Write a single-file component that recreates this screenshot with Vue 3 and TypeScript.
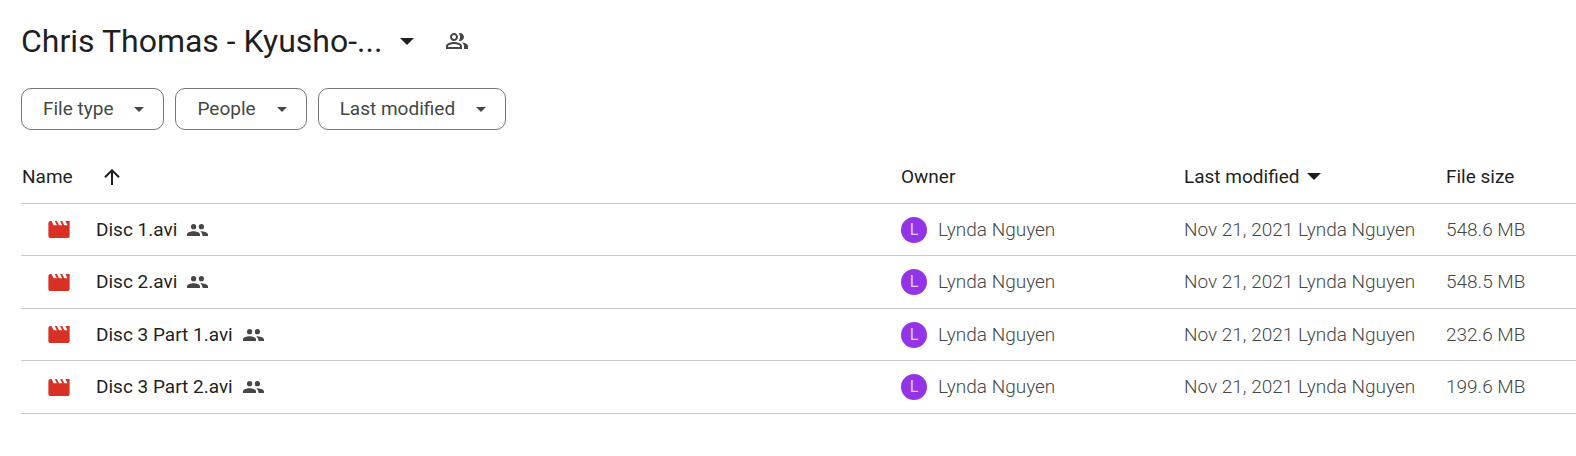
<script setup lang="ts">
interface DriveFile {
  name: string
  owner: string
  modified: string
  size: string
}

const folderName = 'Chris Thomas - Kyusho-...'
const filters: string[] = ['File type', 'People', 'Last modified']

const makeFile = (name: string, size: string): DriveFile => ({
  name,
  owner: 'Lynda Nguyen',
  modified: 'Nov 21, 2021 Lynda Nguyen',
  size,
})

const files: DriveFile[] = [
  makeFile('Disc 1.avi', '548.6 MB'),
  makeFile('Disc 2.avi', '548.5 MB'),
  makeFile('Disc 3 Part 1.avi', '232.6 MB'),
  makeFile('Disc 3 Part 2.avi', '199.6 MB'),
]
</script>

<template>
  <main class="drive">
    <header class="heading">
      <h1>
        <button class="folder" type="button">
          <span>{{ folderName }}</span>
          <svg class="caret-large" viewBox="0 0 14 7" aria-hidden="true"><path d="M0 0h14L7 7z" /></svg>
        </button>
      </h1>
      <button class="share" type="button" aria-label="Manage access">
        <svg viewBox="0 0 24 24" aria-hidden="true">
          <path d="M16.67 13.13C18.04 14.06 19 15.32 19 17v3h4v-3c0-2.18-3.57-3.47-6.33-3.87zM15 12c2.21 0 4-1.79 4-4s-1.79-4-4-4c-.47 0-.91.1-1.33.24C14.5 5.27 15 6.58 15 8s-.5 2.73-1.33 3.76c.42.14.86.24 1.33.24zM9 12c2.21 0 4-1.79 4-4s-1.79-4-4-4-4 1.79-4 4 1.79 4 4 4zm0-6c1.1 0 2 .9 2 2s-.9 2-2 2-2-.9-2-2 .9-2 2-2zM9 13c-2.67 0-8 1.34-8 4v3h16v-3c0-2.66-5.33-4-8-4zm6 5H3v-.99C3.2 16.29 6.3 15 9 15s5.8 1.29 6 2v1z" />
        </svg>
      </button>
    </header>

    <div class="filters">
      <button v-for="filter in filters" :key="filter" class="chip" type="button">
        <span>{{ filter }}</span>
        <svg class="caret-small" viewBox="0 0 10 5" aria-hidden="true"><path d="M0 0h10L5 5z" /></svg>
      </button>
    </div>

    <table class="files">
      <colgroup>
        <col />
        <col class="col-owner" />
        <col class="col-modified" />
        <col class="col-size" />
      </colgroup>
      <thead>
        <tr>
          <th scope="col" aria-sort="ascending">
            <button class="sort name-sort" type="button">
              <span>Name</span>
              <svg class="arrow" viewBox="0 0 16 16" aria-hidden="true">
                <path d="M8 16V1.5M1 8.3l7-7 7 7" />
              </svg>
            </button>
          </th>
          <th scope="col">Owner</th>
          <th scope="col">
            <button class="sort modified-sort" type="button">
              <span>Last modified</span>
              <svg class="caret-large" viewBox="0 0 14 7" aria-hidden="true"><path d="M0 0h14L7 7z" /></svg>
            </button>
          </th>
          <th scope="col">File size</th>
        </tr>
      </thead>
      <tbody>
        <tr v-for="file in files" :key="file.name">
          <td>
            <div class="file">
              <svg class="movie" viewBox="2 4 20 16" aria-hidden="true">
                <path d="M18 4l2 4h-3l-2-4h-2l2 4h-3l-2-4H8l2 4H7L5 4H4c-1.1 0-1.99.9-1.99 2L2 18c0 1.1.9 2 2 2h16c1.1 0 2-.9 2-2V4h-4z" />
              </svg>
              <span class="file-name">{{ file.name }}</span>
              <svg class="shared" viewBox="0 0 21 12" role="img" aria-label="Shared">
                <circle cx="6.6" cy="2.7" r="2.6" />
                <circle cx="14.4" cy="2.7" r="2.6" />
                <path d="M0 12v-1.6C0 8.2 3.8 7.2 6.5 7.2s6.5 1 6.5 3.2V12zM13.2 7.2c3.3 0 7.8 1 7.8 3.2V12h-5.4c0-2-.9-3.5-2.4-4.8z" />
              </svg>
            </div>
          </td>
          <td>
            <div class="owner">
              <span class="avatar" aria-hidden="true">{{ file.owner.charAt(0) }}</span>
              <span>{{ file.owner }}</span>
            </div>
          </td>
          <td>{{ file.modified }}</td>
          <td>{{ file.size }}</td>
        </tr>
      </tbody>
    </table>
  </main>
</template>

<style>
body {
  margin: 0;
  background: #fff;
}
</style>

<style scoped>
.drive {
  padding: 20px 0 0 21px;
  color: #1f1f1f;
  font-family: Roboto, "Liberation Sans", sans-serif;
  font-size: 19px;
  line-height: 24px;
}

button {
  margin: 0;
  padding: 0;
  border: 0;
  background: none;
  color: inherit;
  font: inherit;
  cursor: pointer;
}

svg {
  display: block;
  flex: none;
  fill: currentColor;
}

.heading {
  display: flex;
  align-items: center;
  gap: 31px;
  height: 42px;
}

h1 {
  margin: 0;
  font-size: 32px;
  font-weight: 400;
  line-height: 40px;
}

.folder {
  display: flex;
  align-items: center;
  gap: 18px;
}

.caret-large {
  width: 14px;
  height: 7px;
}

.caret-small {
  width: 10px;
  height: 5px;
}

.share {
  color: #444746;
}

.share svg {
  width: 24px;
  height: 24px;
}

.filters {
  display: flex;
  gap: 11px;
  margin-top: 26px;
}

.chip {
  display: flex;
  align-items: center;
  gap: 21px;
  height: 42px;
  padding: 0 19px 0 21px;
  border: 1px solid #747775;
  border-radius: 10px;
  color: #444746;
}

.files {
  width: 100%;
  margin-top: 20px;
  border-collapse: separate;
  border-spacing: 0;
  table-layout: fixed;
}

.col-owner {
  width: 283px;
}

.col-modified {
  width: 262px;
}

.col-size {
  width: 130px;
}

th,
td {
  box-sizing: border-box;
  height: 52px;
  padding: 0;
  border-bottom: 1px solid #c7c7c7;
  text-align: left;
  white-space: nowrap;
}

th {
  height: 54px;
  font-weight: 400;
}

td {
  color: #444746;
  font-weight: 300;
}

tbody tr:nth-child(even) td {
  height: 53px;
}

.sort {
  display: flex;
  align-items: center;
}

.name-sort {
  gap: 31px;
  padding-left: 1px;
}

.modified-sort {
  gap: 8px;
}

.arrow {
  width: 16px;
  height: 16px;
  fill: none;
  stroke: currentColor;
  stroke-width: 2;
}

.file {
  display: flex;
  align-items: center;
  padding-left: 27px;
}

.movie {
  width: 22px;
  height: 17px;
  margin-right: 26px;
  color: #d93025;
}

.file-name {
  margin-right: 10px;
  color: #1f1f1f;
  font-weight: 400;
}

.shared {
  width: 21px;
  height: 12px;
  color: #444746;
}

.owner {
  display: flex;
  align-items: center;
  gap: 11px;
}

.avatar {
  width: 26px;
  height: 26px;
  border-radius: 50%;
  background: #9334e6;
  color: #e4ccf9;
  font-size: 16px;
  font-weight: 400;
  line-height: 26px;
  text-align: center;
}
</style>
